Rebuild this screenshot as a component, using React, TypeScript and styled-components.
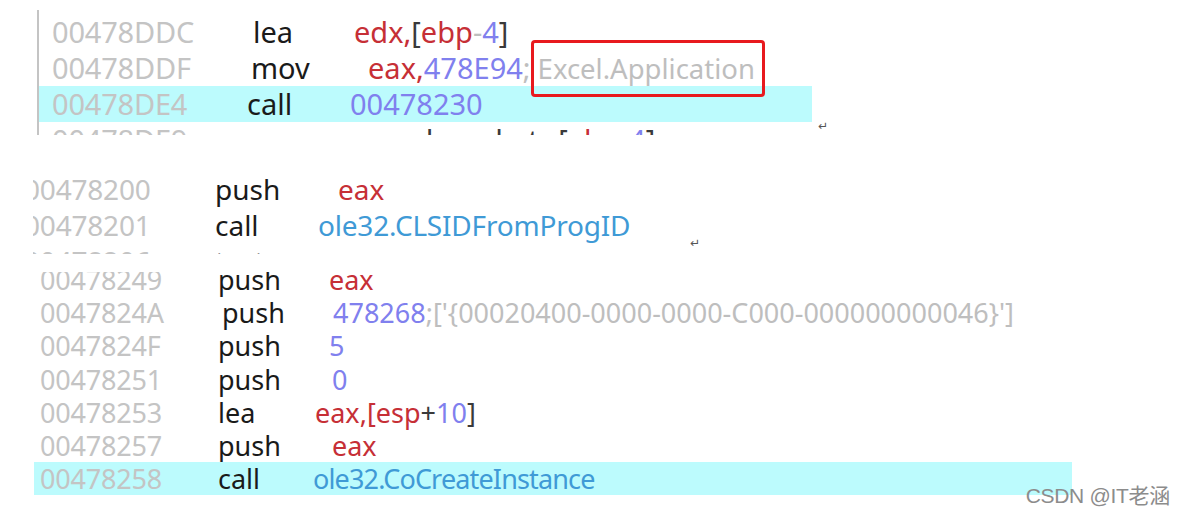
import React from 'react';
import styled, { createGlobalStyle } from 'styled-components';

type Kind = 'reg' | 'num' | 'punc' | 'cmt' | 'api';

interface Tok {
    t: string;
    k: Kind;
    boxed?: boolean;
    ls?: number;
}

interface AsmLine {
    addr: string;
    mnem: string;
    mx: number;
    ox: number;
    ops: Tok[];
    hl?: boolean;
}

interface Snippet {
    left: number;
    gap: number;
    width: number;
    height: number;
    fontSize: number;
    lineH: number;
    addrX: number;
    shift: number;
    rule?: boolean;
    mark?: { ml: number; mb: number };
    lines: AsmLine[];
}

const colors: Record<Kind, string> = {
    reg: '#c62f36',
    num: '#8080ee',
    punc: '#3a3a3a',
    cmt: '#bebebe',
    api: '#3f9ad6',
};

const GlobalStyle = createGlobalStyle`
    html, body {
        margin: 0;
        padding: 0;
        background: #fff;
    }
    body {
        font-family: 'Noto Sans', 'Open Sans', sans-serif;
    }
`;

const Page = styled.div`
    position: relative;
    width: 1182px;
    height: 515px;
    overflow: hidden;
    box-sizing: border-box;
    padding-top: 10px;
    display: flex;
    flex-direction: column;
`;

const Strip = styled.div<{ $left: number; $gap: number }>`
    display: flex;
    align-items: flex-end;
    margin-left: ${({ $left }) => $left}px;
    margin-top: ${({ $gap }) => $gap}px;
`;

const Frame = styled.div<{ $w: number; $h: number; $fs: number; $rule?: boolean }>`
    width: ${({ $w }) => $w}px;
    height: ${({ $h }) => $h}px;
    font-size: ${({ $fs }) => $fs}px;
    overflow: hidden;
    box-sizing: border-box;
    border-left: ${({ $rule }) => ($rule ? '2px solid #c4c4c4' : 'none')};
    flex: none;
`;

const Lines = styled.div<{ $shift: number }>`
    margin-top: ${({ $shift }) => $shift}px;
    display: flex;
    flex-direction: column;
`;

const Line = styled.div<{ $h: number; $hl?: boolean; $indent: number }>`
    display: flex;
    height: ${({ $h }) => $h}px;
    line-height: ${({ $h }) => $h}px;
    padding-left: ${({ $indent }) => Math.max($indent, 0)}px;
    margin-left: ${({ $indent }) => Math.min($indent, 0)}px;
    background: ${({ $hl }) => ($hl ? '#bcfbfd' : 'transparent')};
    white-space: nowrap;
`;

const Addr = styled.span<{ $w: number }>`
    width: ${({ $w }) => $w}px;
    flex: none;
    color: #c4c4c4;
    letter-spacing: -0.2px;
`;

const Mnem = styled.span<{ $w: number }>`
    width: ${({ $w }) => $w}px;
    flex: none;
    color: #1a1a1a;
`;

const Ops = styled.span`
    flex: none;
`;

const Part = styled.span<{ $k: Kind; $ls?: number }>`
    color: ${({ $k }) => colors[$k]};
    letter-spacing: ${({ $ls }) => $ls ?? 0}px;
`;

const Boxed = styled.span`
    position: relative;
    margin-left: 7px;
    color: ${colors.cmt};
    font-size: 27.5px;

    &::after {
        content: '';
        position: absolute;
        left: -7px;
        right: -10px;
        top: -10px;
        bottom: -10px;
        border: 3px solid #e8191e;
        border-radius: 4px;
    }
`;

const ReturnMark = styled.span<{ $ml: number; $mb: number }>`
    font-family: 'DejaVu Sans', sans-serif;
    font-size: 12px;
    line-height: 12px;
    color: #555;
    margin-left: ${({ $ml }) => $ml}px;
    margin-bottom: ${({ $mb }) => $mb}px;
`;

const Watermark = styled.div`
    position: absolute;
    right: 12px;
    bottom: 6px;
    font-family: 'Liberation Sans', 'Noto Sans CJK SC', sans-serif;
    font-size: 21px;
    color: #8c8c8c;
    letter-spacing: -0.3px;
`;

const r = (t: string): Tok => ({ t, k: 'reg' });
const n = (t: string): Tok => ({ t, k: 'num' });
const p = (t: string): Tok => ({ t, k: 'punc' });
const c = (t: string): Tok => ({ t, k: 'cmt' });
const a = (t: string, ls?: number): Tok => ({ t, k: 'api', ls });

const snippets: Snippet[] = [
    {
        left: 37,
        gap: 0,
        width: 775,
        height: 125,
        fontSize: 29,
        lineH: 36,
        addrX: 52,
        shift: 4,
        rule: true,
        mark: { ml: 6, mb: 3 },
        lines: [
            { addr: '00478DDC', mnem: 'lea', mx: 253, ox: 354, ops: [r('edx,'), p('['), r('ebp'), c('-'), n('4'), p(']')] },
            { addr: '00478DDF', mnem: 'mov', mx: 251, ox: 368, ops: [r('eax,'), n('478E94'), c(';'), { t: 'Excel.Application', k: 'cmt', boxed: true }] },
            { addr: '00478DE4', mnem: 'call', mx: 247, ox: 350, ops: [n('00478230')], hl: true },
            { addr: '00478DE9', mnem: 'mov', mx: 250, ox: 362, ops: [r('ecx,'), p('dword ptr '), p('['), r('ebp'), c('-'), n('4'), p(']')] },
        ],
    },
    {
        left: 33,
        gap: 25,
        width: 650,
        height: 94,
        fontSize: 28,
        lineH: 36,
        addrX: 24,
        shift: 11,
        mark: { ml: 7, mb: 5 },
        lines: [
            { addr: '00478200', mnem: 'push', mx: 215, ox: 338, ops: [r('eax')] },
            { addr: '00478201', mnem: 'call', mx: 215, ox: 318, ops: [a('ole32.CLSIDFromProgID', -0.2)] },
            { addr: '00478206', mnem: 'test', mx: 215, ox: 330, ops: [r('eax,'), r('eax')] },
        ],
    },
    {
        left: 34,
        gap: 18,
        width: 1038,
        height: 228,
        fontSize: 27,
        lineH: 33.2,
        addrX: 40,
        shift: -9,
        lines: [
            { addr: '00478249', mnem: 'push', mx: 218, ox: 329, ops: [r('eax')] },
            { addr: '0047824A', mnem: 'push', mx: 222, ox: 333, ops: [n('478268'), c(";['{00020400-0000-0000-C000-000000000046}']")] },
            { addr: '0047824F', mnem: 'push', mx: 218, ox: 329, ops: [n('5')] },
            { addr: '00478251', mnem: 'push', mx: 218, ox: 332, ops: [n('0')] },
            { addr: '00478253', mnem: 'lea', mx: 218, ox: 315, ops: [r('eax,[esp'), p('+'), n('10'), p(']')] },
            { addr: '00478257', mnem: 'push', mx: 218, ox: 332, ops: [r('eax')] },
            { addr: '00478258', mnem: 'call', mx: 218, ox: 313, ops: [a('ole32.CoCreateInstance', -0.85)], hl: true },
        ],
    },
];

const SnippetView = ({ s }: { s: Snippet }) => {
    const contentLeft = s.left + (s.rule ? 2 : 0);
    return (
        <Strip $left={s.left} $gap={s.gap}>
            <Frame $w={s.width} $h={s.height} $fs={s.fontSize} $rule={s.rule}>
                <Lines $shift={s.shift}>
                    {s.lines.map((line, i) => (
                        <Line key={i} $h={s.lineH} $hl={line.hl} $indent={s.addrX - contentLeft}>
                            <Addr $w={line.mx - s.addrX}>{line.addr}</Addr>
                            <Mnem $w={line.ox - line.mx}>{line.mnem}</Mnem>
                            <Ops>
                                {line.ops.map((tok, j) =>
                                    tok.boxed ? (
                                        <Boxed key={j}>{tok.t}</Boxed>
                                    ) : (
                                        <Part key={j} $k={tok.k} $ls={tok.ls}>
                                            {tok.t}
                                        </Part>
                                    ),
                                )}
                            </Ops>
                        </Line>
                    ))}
                </Lines>
            </Frame>
            {s.mark && (
                <ReturnMark $ml={s.mark.ml} $mb={s.mark.mb}>
                    ↵
                </ReturnMark>
            )}
        </Strip>
    );
};

const App = () => (
    <>
        <GlobalStyle />
        <Page>
            {snippets.map((s, i) => (
                <SnippetView key={i} s={s} />
            ))}
            <Watermark>CSDN @IT老涵</Watermark>
        </Page>
    </>
);

export default App;
